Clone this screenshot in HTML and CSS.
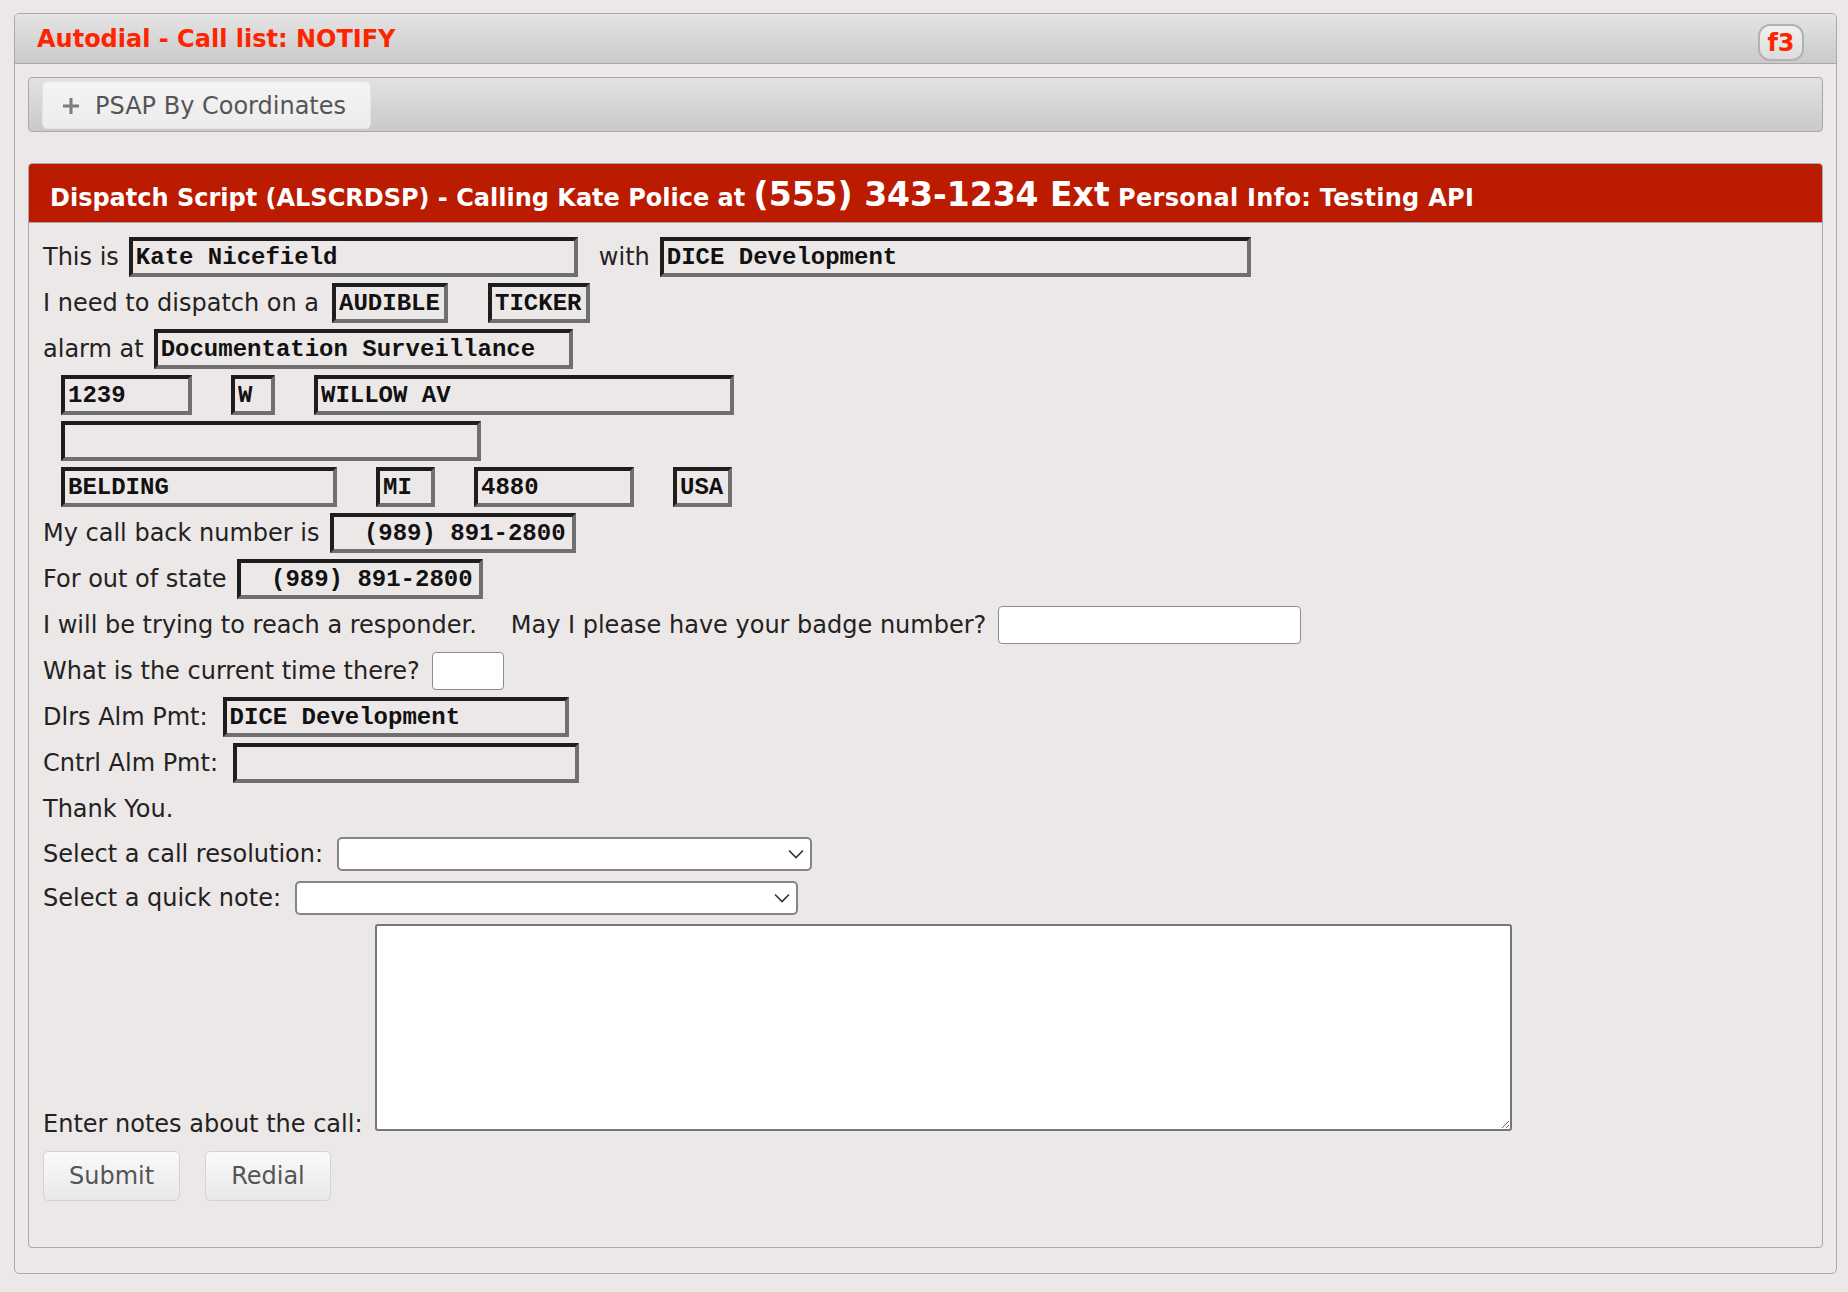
FILE: index.html
```html
<!DOCTYPE html>
<html lang="en">
  <head>
    <meta charset="UTF-8" />
    <meta name="viewport" content="width=device-width, initial-scale=1.0" />
    <title>Autodial - Call list: NOTIFY</title>
    <link rel="stylesheet" href="styles.css">
  </head>
  <body>
    <!-- AUTODIAL PANEL -->
    <div class="panel">
      <div class="panel-head">
        <span class="panel-title">Autodial - Call list: NOTIFY</span>
        <span class="hotkey">f3</span>
      </div>

      <div class="panel-body">
        <!-- TABS -->
        <div class="tabbar">
          <div class="tab">
            <svg class="tab-icon" width="16" height="16" viewBox="0 0 16 16">
              <rect x="0" y="6.5" width="16" height="3" fill="#7c7c7c" />
              <rect x="6.5" y="0" width="3" height="16" fill="#7c7c7c" />
            </svg>
            <span>PSAP By Coordinates</span>
          </div>
        </div>

        <!-- DISPATCH SCRIPT -->
        <div class="script">
          <div class="script-head">Dispatch Script (ALSCRDSP) - Calling Kate Police at <span class="script-phone">(555) 343-1234 Ext</span> <span class="script-info">Personal Info: Testing API</span></div>

          <form class="script-body">
            <div class="row">
              <span>This is</span>
              <input class="field f-name" type="text" value="Kate Nicefield">
              <span class="with">with</span>
              <input class="field f-company" type="text" value="DICE Development">
            </div>

            <div class="row row-type">
              <span>I need to dispatch on a</span>
              <input class="field f-audible" type="text" value="AUDIBLE">
              <input class="field f-ticker" type="text" value="TICKER">
            </div>

            <div class="row">
              <span>alarm at</span>
              <input class="field f-alarm" type="text" value="Documentation Surveillance">
            </div>

            <!-- address -->
            <div class="row row-addr">
              <input class="field f-num" type="text" value="1239">
              <input class="field f-dir" type="text" value="W">
              <input class="field f-street" type="text" value="WILLOW AV">
            </div>
            <div class="row row-addr">
              <input class="field f-street" type="text" value="">
            </div>
            <div class="row row-addr">
              <input class="field f-city" type="text" value="BELDING">
              <input class="field f-state" type="text" value="MI">
              <input class="field f-zip" type="text" value="4880">
              <input class="field f-state" type="text" value="USA">
            </div>

            <div class="row">
              <span>My call back number is</span>
              <input class="field f-phone" type="text" value="(989) 891-2800">
            </div>
            <div class="row">
              <span>For out of state</span>
              <input class="field f-phone" type="text" value="(989) 891-2800">
            </div>

            <div class="row row-ask">
              <span>I will be trying to reach a responder.</span>
              <span class="ask">May I please have your badge number?</span>
              <input class="plain f-badge" type="text">
            </div>
            <div class="row row-ask">
              <span>What is the current time there?</span>
              <input class="plain f-time" type="text">
            </div>

            <div class="row row-pmt">
              <span>Dlrs Alm Pmt:</span>
              <input class="field f-pmt" type="text" value="DICE Development">
            </div>
            <div class="row row-pmt">
              <span>Cntrl Alm Pmt:</span>
              <input class="field f-pmt" type="text" value="">
            </div>

            <div class="row">
              <span>Thank You.</span>
            </div>

            <div class="row row-select">
              <span>Select a call resolution:</span>
              <div class="select-wrap">
                <select class="f-resolution"><option></option></select>
                <svg class="chevron" width="16" height="10" viewBox="0 0 16 10">
                  <polyline points="1,1.5 8,8.5 15,1.5" fill="none" stroke="#333" stroke-width="1.6" />
                </svg>
              </div>
            </div>
            <div class="row row-select">
              <span>Select a quick note:</span>
              <div class="select-wrap">
                <select class="f-note"><option></option></select>
                <svg class="chevron" width="16" height="10" viewBox="0 0 16 10">
                  <polyline points="1,1.5 8,8.5 15,1.5" fill="none" stroke="#333" stroke-width="1.6" />
                </svg>
              </div>
            </div>

            <div class="row row-notes">
              <span class="notes-label">Enter notes about the call:</span>
              <textarea class="notes"></textarea>
            </div>

            <div class="actions">
              <button type="button" class="btn">Submit</button>
              <button type="button" class="btn">Redial</button>
            </div>
          </form>
        </div>
      </div>
    </div>
  </body>
</html>
```

FILE: styles.css
```css
* {
  box-sizing: border-box;
}

body {
  margin: 0;
  padding: 13px 11px 0 14px;
  background-color: #ece8e7;
  font-family: "DejaVu Sans", Verdana, sans-serif;
  font-size: 24px;
  color: #222;
}

/* outer autodial panel */
.panel {
  border: 1px solid #a9a9a9;
  border-radius: 5px;
}

.panel-head {
  display: flex;
  align-items: center;
  justify-content: space-between;
  height: 50px;
  padding: 0 32px 0 22px;
  background: linear-gradient(#e4e4e4, #cacaca);
  border-bottom: 1px solid #a9a9a9;
  border-radius: 4px 4px 0 0;
}

.panel-title {
  color: #ff2400;
  font-weight: bold;
}

.hotkey {
  display: flex;
  align-items: center;
  justify-content: center;
  width: 46px;
  height: 37px;
  margin-top: 8px;
  border: 2px solid #b2b2b2;
  border-radius: 12px;
  background: linear-gradient(#f1f1f1, #dcdcdc);
  color: #ff2400;
  font-weight: bold;
}

.panel-body {
  padding: 13px 13px 25px 13px;
}

/* tabs */
.tabbar {
  height: 55px;
  padding: 3px 13px 0;
  border: 1px solid #a9a9a9;
  border-radius: 4px;
  background: linear-gradient(#e2e2e2, #c9c9c9);
}

.tab {
  display: inline-flex;
  align-items: center;
  height: 48px;
  padding: 2px 24px 0 20px;
  border: 1px solid #e3e3e3;
  border-radius: 5px;
  background: linear-gradient(#f4f4f4, #ececec);
  color: #555;
}

.tab-icon {
  margin-right: 16px;
}

/* dispatch script */
.script {
  margin-top: 31px;
  border: 1px solid #a9a9a9;
  border-radius: 4px;
}

.script-head {
  height: 59px;
  padding: 11px 19px 0 21px;
  background-color: #bb1b00;
  border-bottom: 1px solid #a9a9a9;
  border-radius: 3px 3px 0 0;
  color: #fff;
  font-weight: bold;
  white-space: nowrap;
}

.script-phone {
  font-size: 33px;
}

.script-info {
  letter-spacing: 0.3px;
}

.script-body {
  margin: 0;
  padding: 11px 14px 46px;
}

.row {
  display: flex;
  align-items: center;
  gap: 10px;
  height: 46px;
  white-space: nowrap;
}

.with {
  margin-left: 11px;
}

.row-type {
  gap: 13px;
}

.row-type .f-ticker {
  margin-left: 27px;
}

.row-addr {
  gap: 39px;
  padding-left: 18px;
}

.row-ask {
  gap: 12px;
}

.ask {
  margin-left: 22px;
}

.row-pmt {
  gap: 15px;
}

.row-select {
  gap: 14px;
  height: 44px;
}

.row-notes {
  align-items: flex-end;
  gap: 13px;
  height: auto;
  margin-top: 4px;
}

.notes-label {
  margin-bottom: -7px;
}

/* script fields */
.field {
  height: 40px;
  margin: 0;
  padding: 0 3px;
  border-style: solid;
  border-width: 4px;
  border-color: #1d1d1d #6f6f6f #6f6f6f #1d1d1d;
  background: transparent;
  font-family: "Liberation Mono", "Courier New", monospace;
  font-size: 24px;
  font-weight: bold;
  color: #111;
}

.f-name { width: 449px; }
.f-company { width: 591px; }
.f-audible { width: 116px; }
.f-ticker { width: 102px; }
.f-alarm { width: 419px; }
.f-num { width: 131px; }
.f-dir { width: 44px; }
.f-street { width: 420px; }
.f-city { width: 276px; }
.f-state { width: 59px; }
.f-zip { width: 160px; }
.f-pmt { width: 346px; }

.f-phone {
  width: 246px;
  padding-right: 6px;
  text-align: right;
}

.plain {
  height: 38px;
  margin: 0;
  border: 1px solid #8c8c8c;
  border-radius: 4px;
  background-color: #fff;
  font-family: inherit;
  font-size: 20px;
}

.f-badge { width: 303px; }
.f-time { width: 72px; }

.select-wrap {
  position: relative;
  display: flex;
}

.select-wrap select {
  height: 34px;
  margin: 0;
  padding: 0 30px 0 8px;
  border: 2px solid #858585;
  border-radius: 5px;
  background-color: #fff;
  font-family: inherit;
  font-size: 20px;
  appearance: none;
  -webkit-appearance: none;
}

.chevron {
  position: absolute;
  right: 8px;
  top: 12px;
  pointer-events: none;
}

.f-resolution { width: 475px; }
.f-note { width: 503px; }

.notes {
  display: block;
  width: 1137px;
  height: 207px;
  margin: 0;
  border: 2px solid #767676;
  border-radius: 3px;
  background-color: #fff;
  resize: both;
}

/* buttons */
.actions {
  display: flex;
  gap: 25px;
  margin-top: 20px;
}

.btn {
  height: 50px;
  padding: 0 25px;
  border: 1px solid #d3d3d3;
  border-radius: 5px;
  background: linear-gradient(#fafafa, #e8e8e8);
  color: #555;
  font-family: inherit;
  font-size: 24px;
  cursor: pointer;
}
```
